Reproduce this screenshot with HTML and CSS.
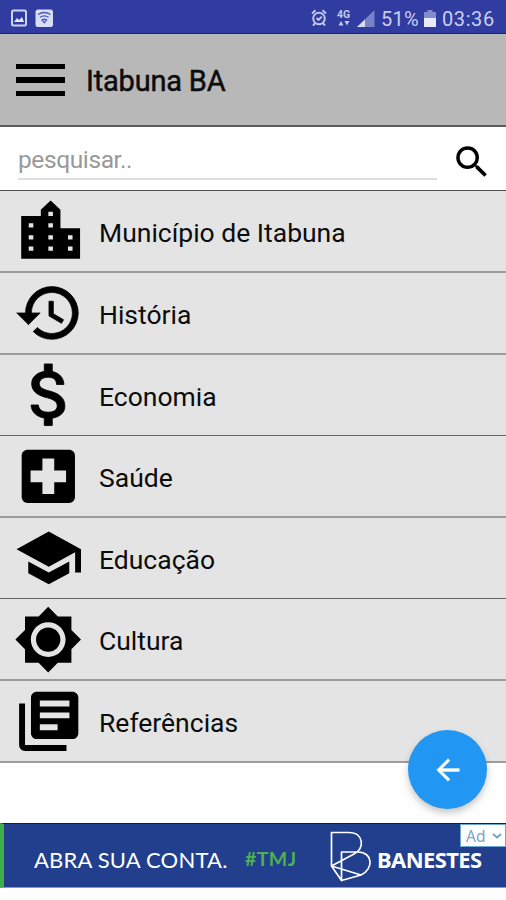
FILE: index.html
```html
<!DOCTYPE html>
<html lang="pt-BR">
<head>
<meta charset="utf-8">
<title>Itabuna BA</title>
<link rel="stylesheet" href="styles.css">
</head>
<body>
<div class="status">
  <svg class="status-left" width="60" height="34" viewBox="0 0 60 34">
    <rect x="12" y="10.500" width="14" height="15" rx="1.500" fill="none" stroke="#cdd3f5" stroke-width="2"/>
    <path d="M14 22l3-4 2 2 3-3 2 5z" fill="#e4e7fb"/>
    <rect x="35.500" y="9.500" width="17.500" height="17.500" rx="2.500" fill="#d9def8"/>
    <path d="M38 14.500q6.300-4 12.600 0M40 17.300q4.300-3 8.600 0M42 20q2.300-1.500 4.600 0l-2.300 2.800z" fill="none" stroke="#4a58b4" stroke-width="1.300"/>
  </svg>
  <svg class="status-icons" width="66" height="34" viewBox="0 0 66 34">
    <g fill="none" stroke="#c3c9ee" stroke-width="1.900">
      <circle cx="9" cy="18.500" r="5.800"/>
      <path d="M2 13.500l3.500-3.300M16 13.500l-3.500-3.300M5 23.200l-2 2.500M13 23.200l2 2.500M6.500 18l2 2 3.300-3.300"/>
    </g>
    <text x="27" y="18" class="net">4G</text>
    <path d="M28.500 25.500l2.500-4.500 2.500 4.500zM34.500 21l2.500 4.500 2.500-4.500z" fill="#c3c9ee"/>
    <path d="M47 27L64.500 10v17z" fill="#7983c9"/>
    <path d="M47 27l8-7.500V27z" fill="#d9def8"/>
  </svg>
  <span class="percent">51%</span>
  <svg class="battery" width="12" height="18" viewBox="0 0 12 18">
    <path d="M3.500 0h5v2H12v6H0V2h3.500z" fill="#828bcc"/><path d="M0 8h12v9H0z" fill="#e9ebfb"/>
  </svg>
  <span class="clock">03:36</span>
</div>
<header class="header">
  <div class="burger"><i></i><i></i><i></i></div>
  <h1>Itabuna BA</h1>
</header>
<div class="search">
  <div class="field">pesquisar..</div>
  <svg width="42" height="42" viewBox="0 0 24 24"><path d="M15.500 14h-.79l-.28-.27A6.471 6.471 0 0 0 16 9.500 6.500 6.500 0 1 0 9.500 16c1.610 0 3.090-.59 4.230-1.570l.27.28v.79l5 4.990L20.490 19l-4.990-5zm-6 0C7.010 14 5 11.990 5 9.500S7.010 5 9.500 5 14 7.010 14 9.500 11.990 14 9.500 14z"/></svg>
</div>
<main class="list">
  <div class="row thick">
    <svg class="icon" viewBox="0 0 99 80"><g transform="translate(11.400 3.500) scale(3.270 3.060)"><path fill-rule="evenodd" d="M15 11V5l-3-3-3 3v2H3v14h18V11zM11.300 5.600h1.400V7h-1.400zM11.300 9.400h1.400v1.400h-1.400zM11.300 13.300h1.400v1.400h-1.400zM11.300 17h1.400v1.400h-1.400zM5.300 9.400h1.400v1.400H5.300zM5.300 13.300h1.400v1.400H5.300zM5.300 17h1.400v1.400H5.300zM17.300 13.300h1.400v1.400h-1.400zM17.300 17h1.400v1.400h-1.400z"/></g></svg>
    <span>Município de Itabuna</span>
  </div>
  <div class="row thick">
    <svg class="icon" viewBox="0 0 99 80"><g transform="translate(13.800 4.800) scale(2.930)"><path class="bold" d="M13 3a9 9 0 0 0-9 9H1l3.890 3.890.07.14L9 12H6c0-3.870 3.130-7 7-7s7 3.130 7 7-3.130 7-7 7c-1.930 0-3.680-.79-4.940-2.060l-1.420 1.420A8.954 8.954 0 0 0 13 21a9 9 0 0 0 0-18zm-1 5v5l4.280 2.540.72-1.210-3.500-2.080V8z"/></g></svg>
    <span>História</span>
  </div>
  <div class="row">
    <svg class="icon" viewBox="0 0 99 80"><g transform="translate(10.100 -1.300) scale(3.320 3.420)"><path class="bold" d="M11.800 10.900c-2.270-.59-3-1.200-3-2.150 0-1.090 1.010-1.850 2.700-1.850 1.780 0 2.440.85 2.500 2.100h2.210c-.07-1.720-1.120-3.300-3.510-3.810V3h-2.400v2.160c-2.240.42-3.800 1.680-3.800 3.610 0 2.310 1.910 3.460 4.700 4.130 2.500.6 3 1.480 3 2.410 0 .69-.49 1.790-2.700 1.790-2.060 0-2.870-.92-2.980-2.100h-2.200c.12 2.190 1.760 3.420 3.980 3.830V21h2.400v-2.150c2.250-.37 3.800-1.500 3.800-3.550 0-2.840-2.430-3.810-4.700-4.400z"/></g></svg>
    <span>Economia</span>
  </div>
  <div class="row thick">
    <svg class="icon" viewBox="0 0 99 80"><g transform="translate(12.800 4.800) scale(2.960)"><path d="M19 3H5c-1.100 0-2 .9-2 2v14c0 1.100.9 2 2 2h14c1.100 0 2-.9 2-2V5c0-1.100-.9-2-2-2zm-1 11h-4v4h-4v-4H6v-4h4V6h4v4h4v4z"/></g></svg>
    <span>Saúde</span>
  </div>
  <div class="row">
    <svg class="icon" viewBox="0 0 99 80"><g transform="translate(13.600 4.800) scale(2.930)"><path d="M5 13.180v4L12 21l7-3.820v-4L12 17l-7-3.820zM12 3L1 9l11 6 9-4.910V17h2V9L12 3z"/></g></svg>
    <span>Educação</span>
  </div>
  <div class="row thick">
    <svg class="icon" viewBox="0 0 99 80"><g transform="translate(13.400 5.800) scale(2.900)"><path d="M20 15.310L23.310 12 20 8.690V4h-4.690L12 .69 8.690 4H4v4.690L.69 12 4 15.310V20h4.690L12 23.310 15.310 20H20v-4.690zM12 18c-3.310 0-6-2.690-6-6s2.690-6 6-6 6 2.690 6 6-2.690 6-6 6z"/><circle cx="12" cy="12" r="4.200"/></g></svg>
    <span>Cultura</span>
  </div>
  <div class="row thick">
    <svg class="icon" viewBox="0 0 99 80"><g transform="translate(13.200 4.800) scale(2.960)"><path d="M4 6H2v14c0 1.100.9 2 2 2h14v-2H4V6zm16-4H8c-1.100 0-2 .9-2 2v12c0 1.100.9 2 2 2h12c1.100 0 2-.9 2-2V4c0-1.100-.9-2-2-2zm-1 9H9V9h10v2zm-4 4H9v-2h6v2zm4-8H9V5h10v2z"/></g></svg>
    <span>Referências</span>
  </div>
</main>
<div class="banner">
  <span class="open">ABRA SUA CONTA.</span>
  <span class="tag">#TMJ</span>
  <svg class="logo" width="42" height="52" viewBox="0 0 42 52" fill="none" stroke="#fff" stroke-width="1.700" stroke-linejoin="round"><path d="M1.500 35V1.500H19C34 1.500 35 18 24 23L1.500 35l10 14.500V21H28c15 0 16 17 3 23z"/><path d="M11.500 49.500L31 44"/></svg>
  <span class="bank">BANESTES</span>
  <div class="ad">Ad<svg width="10" height="6" viewBox="0 0 10 6"><path d="M1 1l4 3.500L9 1" fill="none" stroke="#6f9fc4" stroke-width="1.700"/></svg></div>
</div>
<div class="fab"><svg width="34" height="34" viewBox="0 0 24 24"><path fill="#fff" stroke="#fff" stroke-width=".3" d="M20 11H7.830l5.590-5.590L12 4l-8 8 8 8 1.410-1.410L7.830 13H20v-2z"/></svg></div>
</body>
</html>
```
FILE: styles.css
```css
* { box-sizing: border-box; }
body {
  margin: 0;
  width: 506px;
  height: 900px;
  position: relative;
  overflow: hidden;
  background: #fefefe;
  color: #0c0c0c;
  font-family: Roboto, "Liberation Sans", sans-serif;
}
svg { display: block; flex: none; }
span { flex: none; white-space: nowrap; }
.status {
  display: flex;
  height: 34px;
  background: #303c9f;
  border-bottom: 1px solid #14258a;
  color: #c9cff2;
  font-size: 20px;
  line-height: 38px;
}
.status-icons { margin-left: 250px; }
.net { font: bold 10.500px Roboto, sans-serif; fill: #c3c9ee; }
.percent { width: 39px; margin-left: 5px; letter-spacing: 0.2px; }
.battery { margin: 10px 6px 0 4px; }
.clock { letter-spacing: 0.6px; }
.header {
  display: flex;
  align-items: center;
  height: 93px;
  padding-left: 16px;
  background: #b8b8b8;
  border-bottom: 2px solid #5c5c5c;
}
.burger { display: grid; gap: 8px; width: 49px; margin: 1px 21px 0 0; }
.burger i { height: 5.500px; background: #000; }
h1 {
  margin: 3px 0 0;
  font-size: 29px;
  font-weight: 400;
  -webkit-text-stroke: 0.5px #0c0c0c;
  letter-spacing: -0.2px;
  line-height: 40px;
}
.search {
  display: flex;
  justify-content: space-between;
  height: 64px;
  padding: 0 13px 0 18px;
  background: #fff;
  border-bottom: 1px solid #505050;
}
.search svg { margin-top: 14px; }
.field {
  width: 419px;
  height: 53px;
  border-bottom: 2px solid #dedede;
  color: #999;
  font-size: 24.500px;
  letter-spacing: -0.4px;
  line-height: 66px;
}
.row {
  display: flex;
  height: 81px;
  background: #e4e4e4;
  border-bottom: 1px solid #666;
  font-size: 26.500px;
  line-height: 83px;
}
.thick { height: 82px; border-bottom: 2px solid #9c9c9c; }
.icon { width: 99px; height: 80px; }
.bold { stroke: #000; stroke-width: 0.25px; }
.banner {
  position: relative;
  display: flex;
  height: 65px;
  margin-top: 60px;
  background: #213f8c;
  border-top: 1px solid #0a1a66;
  border-bottom: 1px solid #8b99bd;
  border-left: 4px solid #3fae49;
  color: #fff;
  font-family: Lato, sans-serif;
  line-height: 71px;
}
.open { width: 241px; padding-left: 30px; font-size: 22px; letter-spacing: 0.200px; }
.tag { width: 85px; color: #4fb04f; font-size: 19.500px; font-weight: 700; line-height: 69px; letter-spacing: 0.4px; }
.logo { margin-top: 7px; }
.bank {
  margin-left: 5px;
  font-family: "Noto Sans", sans-serif;
  font-size: 22px;
  font-weight: 700;
  letter-spacing: -0.6px;
}
.ad {
  position: absolute;
  top: 0;
  right: 0;
  display: flex;
  align-items: center;
  gap: 7px;
  width: 46px;
  height: 23px;
  padding-left: 5px;
  background: #fff;
  border: 1px solid #6aaad4;
  color: #7ba3c2;
  font: 15.500px "Noto Sans", sans-serif;
}
.fab {
  position: absolute;
  left: 408px;
  top: 730px;
  display: grid;
  place-items: center;
  width: 79px;
  height: 79px;
  border-radius: 50%;
  background: #2196f3;
  box-shadow: 0 4px 7px rgba(0, 0, 0, 0.22);
}
```
